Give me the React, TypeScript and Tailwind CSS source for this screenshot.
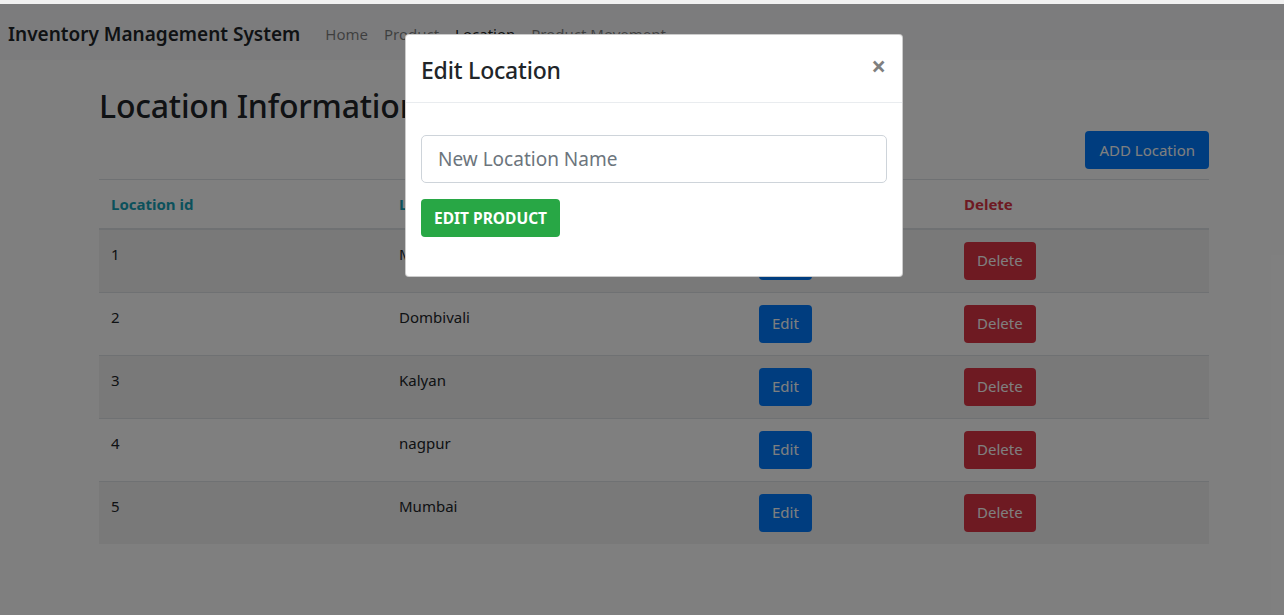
import React from 'react';

type Loc = { id: number; name: string };

const locations: Loc[] = [
  { id: 1, name: 'Mumbai' },
  { id: 2, name: 'Dombivali' },
  { id: 3, name: 'Kalyan' },
  { id: 4, name: 'nagpur' },
  { id: 5, name: 'Mumbai' },
];

export default function App() {
  return (
    <div className="relative h-[615px] w-[1284px] overflow-hidden bg-white text-[#212529] font-['Noto_Sans',sans-serif]">
      <div className="h-[4px] bg-[#f1f1f1]" />

      {/* page under the modal */}
      <nav className="flex h-[56px] items-center bg-[#f8f9fa] px-[8px] pt-[4px]">
        <span className="mr-[25px] text-[19px] font-semibold">Inventory Management System</span>
        <div className="flex gap-[16px] text-[15px] text-black/50">
          <span>Home</span>
          <span>Product</span>
          <span className="text-black/90">Location</span>
          <span>Product Movement</span>
        </div>
      </nav>

      <main className="ml-[99px] w-[1110px]">
        <h1 className="mt-[22px] text-[32px] font-medium leading-[48px] tracking-[-0.2px]">Location Information</h1>
        <div className="flex justify-end pt-[1px] pb-[10px]">
          <button className="h-[38px] rounded-[4px] bg-[#007bff] px-[14px] text-[15px] text-white">ADD Location</button>
        </div>
        <table className="w-full border-collapse text-[15px]">
          <thead>
            <tr className="h-[49px] border-t border-b-2 border-[#dee2e6] text-left">
              <th className="w-[288px] px-[12px] font-bold text-[#17a2b8]">Location id</th>
              <th className="w-[360px] px-[12px] font-bold text-[#17a2b8]">Location Name</th>
              <th className="w-[205px] px-[12px] font-bold text-[#007bff]">Edit</th>
              <th className="px-[12px] font-bold text-[#dc3545]">Delete</th>
            </tr>
          </thead>
          <tbody>
            {locations.map((l, i) => (
              <tr key={l.id} className={`border-t border-[#dee2e6] ${i % 2 === 0 ? 'bg-black/[0.05]' : ''}`}>
                <td className="px-[12px] py-[12px] align-top leading-[24px]">{l.id}</td>
                <td className="px-[12px] py-[12px] align-top leading-[24px]">{l.name}</td>
                <td className="px-[12px] py-[12px] align-top">
                  <button className="h-[38px] rounded-[4px] bg-[#007bff] px-[13px] text-[15px] text-white">Edit</button>
                </td>
                <td className="px-[12px] py-[12px] align-top">
                  <button className="h-[38px] rounded-[4px] bg-[#dc3545] px-[13px] text-[15px] text-white">Delete</button>
                </td>
              </tr>
            ))}
          </tbody>
        </table>
      </main>

      {/* backdrop */}
      <div className="absolute inset-x-0 top-[4px] bottom-0 bg-black/50" />

      {/* modal */}
      <div className="absolute left-[405px] top-[34px] w-[498px] rounded-[4px] border border-black/20 bg-white">
        <div className="flex h-[68px] items-start justify-between border-b border-[#e9ecef] px-[15px] pt-[18px]">
          <h4 className="text-[23px] font-medium leading-[34px] tracking-[-0.2px]">Edit Location</h4>
          <span className="mt-[-4px] mr-[1px] text-[26px] font-bold leading-[34px] text-black/50">×</span>
        </div>
        <div className="px-[15px] pt-[32px] pb-[39px]">
          <input
            className="block h-[48px] w-full rounded-[5px] border border-[#ced4da] px-[16px] text-[19px] outline-none placeholder:text-[#6c757d]"
            placeholder="New Location Name"
          />
          <button className="mt-[16px] h-[38px] rounded-[4px] bg-[#28a745] px-[13px] pt-[1px] text-[15.5px] font-bold uppercase text-white">
            Edit Product
          </button>
        </div>
      </div>
    </div>
  );
}
